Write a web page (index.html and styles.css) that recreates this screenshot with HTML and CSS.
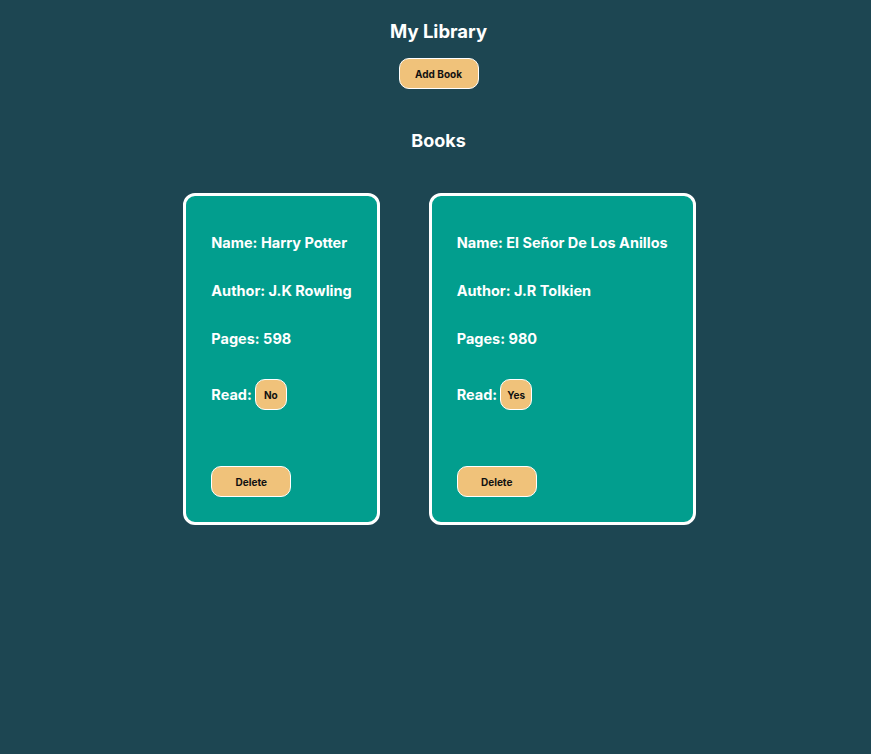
FILE: index.html
```html
<!DOCTYPE html>
<html lang="en">
<head>
<meta charset="utf-8">
<title>My Library</title>
<link rel="stylesheet" href="styles.css">
</head>
<body>
  <header class="header">
    <h1 class="title">My Library</h1>
    <button class="btn btn-add">Add Book</button>
  </header>
  <main class="main">
    <h2 class="subtitle">Books</h2>
    <div class="cards">
      <div class="card">
        <p class="line">Name: Harry Potter</p>
        <p class="line">Author: J.K Rowling</p>
        <p class="line">Pages: 598</p>
        <div class="read-row"><span class="line">Read:</span><button class="btn btn-read">No</button></div>
        <button class="btn btn-delete">Delete</button>
      </div>
      <div class="card">
        <p class="line">Name: El Señor De Los Anillos</p>
        <p class="line">Author: J.R Tolkien</p>
        <p class="line">Pages: 980</p>
        <div class="read-row"><span class="line">Read:</span><button class="btn btn-read">Yes</button></div>
        <button class="btn btn-delete">Delete</button>
      </div>
    </div>
  </main>
</body>
</html>
```
FILE: styles.css
```css
* { box-sizing: border-box; }
html, body { margin: 0; padding: 0; }
body {
  background: #1d4652;
  color: #ffffff;
  font-family: "Inter", "Noto Sans", sans-serif;
  min-height: 754px;
  padding-left: 6px;
}
.header {
  display: flex;
  flex-direction: column;
  align-items: center;
  padding-top: 19px;
}
.title {
  margin: 0;
  font-size: 18.5px;
  line-height: 24px;
  font-weight: 700;
}
.btn {
  font-family: "Inter", "Noto Sans", sans-serif;
  background: #f0c27a;
  color: #111;
  border: 1px solid #ffffff;
  border-radius: 10px;
  font-weight: 700;
  font-size: 10px;
  height: 31px;
  padding: 0;
  cursor: pointer;
}
.btn-add { margin-top: 15px; width: 80px; }
.main {
  display: flex;
  flex-direction: column;
  align-items: center;
  padding-top: 41px;
}
.subtitle {
  margin: 0;
  font-size: 18px;
  line-height: 22px;
  font-weight: 700;
}
.cards {
  display: flex;
  justify-content: center;
  gap: 49px;
  margin-top: 41px;
  padding-left: 2px;
}
.card {
  background: #029e8e;
  border: 3px solid #ffffff;
  border-radius: 12px;
  padding: 37px 25px 25px 25px;
  display: flex;
  flex-direction: column;
  align-items: flex-start;
}
.line {
  margin: 0 0 28px 0;
  font-size: 14.5px;
  line-height: 20px;
  font-weight: 700;
  white-space: nowrap;
}
.read-row {
  display: flex;
  align-items: center;
  gap: 3px;
  margin-top: 2px;
}
.read-row .line { margin: 0; }
.btn-read { width: 32px; }
.btn-delete { width: 80px; margin-top: 56px; }
```
